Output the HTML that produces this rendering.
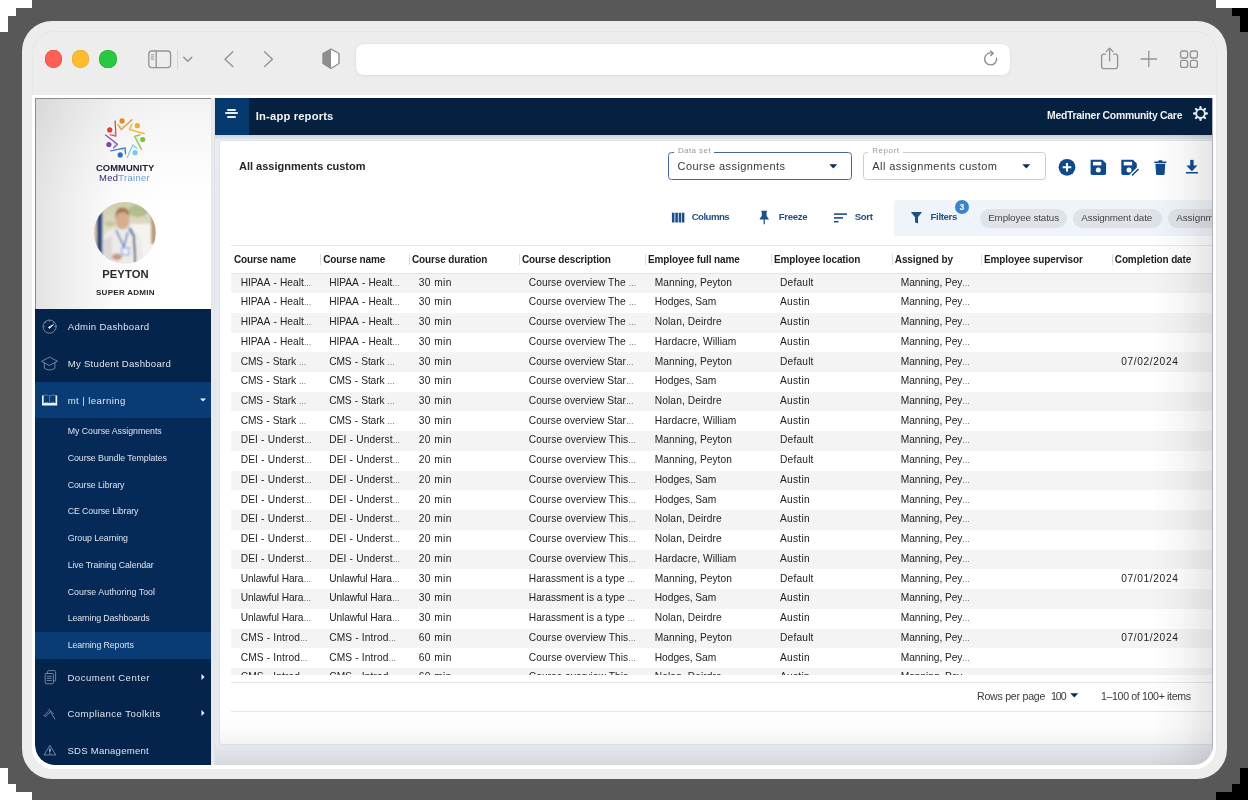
<!DOCTYPE html><html><head><meta charset="utf-8"><style>*{box-sizing:border-box;margin:0;padding:0}
html,body{width:1250px;height:800px;overflow:hidden;background:#585858;font-family:"Liberation Sans",sans-serif}
.a{position:absolute}
.t{position:absolute;white-space:nowrap;line-height:1}
#win{left:22px;top:21px;width:1205px;height:758px;border-radius:30px;background:#ededed}
#winline{left:32px;top:31px;width:1185px;height:738px;border-radius:22px;border:1px solid #e6e6e6}
.tl{width:17.6px;height:17.6px;border-radius:50%}
#url{left:356px;top:44px;width:654px;height:31px;border-radius:8px;background:#fff;box-shadow:0 0 0 0.5px rgba(0,0,0,.03),0 1px 4px rgba(0,0,0,.05)}
#frame{left:31.5px;top:94.5px;width:1184.5px;height:674.5px;background:#fff;border-radius:0 0 21px 21px}
#app{left:35px;top:98px;width:1178px;height:667px;overflow:hidden;border-radius:0 0 18px 18px;background:#e4e8ee}
#sbtop{left:0;top:0;width:176px;height:211px;background:linear-gradient(180deg,#dedede 0%,#f3f3f3 40%,#fff 100%);border-left:1px solid #8a8a8a;border-top:1px solid #8a8a8a}
#sbnav{left:0;top:211px;width:176px;height:456px;background:#05244c}
#sbborder{left:176px;top:0;width:4px;height:667px;background:linear-gradient(90deg,#d6d6d6,#ececec,#f4f4f4)}
#hdr{left:180px;top:0;width:998px;height:37px;background:#061e3d}
#hamb{left:180px;top:0;width:34px;height:37px;background:#053565}
.nav{color:#dfe4ec;font-size:10px}
.sub{color:#dfe4ec;font-size:8.65px}
#card{left:185px;top:43px;width:1000px;height:603px;background:#fff;border-radius:3px}
.hd{font-size:9.6px;font-weight:700;color:#2b2b2b}
.cell{font-size:9.4px;color:#2e2e2e}
</style></head><body><div class="a" style="left:0;top:0;width:1250px;height:800px;overflow:hidden;will-change:transform">
<div class="a" style="left:0.00px;top:0.00px;width:32.00px;height:8.00px;background:#fff"></div>
<div class="a" style="left:0.00px;top:8.00px;width:16.00px;height:8.00px;background:#fff"></div>
<div class="a" style="left:0.00px;top:16.00px;width:8.00px;height:16.00px;background:#fff"></div>
<div class="a" style="left:0.00px;top:768.00px;width:8.00px;height:16.00px;background:#fff"></div>
<div class="a" style="left:0.00px;top:784.00px;width:16.00px;height:8.00px;background:#fff"></div>
<div class="a" style="left:0.00px;top:792.00px;width:32.00px;height:8.00px;background:#fff"></div>
<div class="a" style="left:1216.00px;top:0.00px;width:34.00px;height:8.00px;background:#fff"></div>
<div class="a" style="left:1232.00px;top:8.00px;width:16.00px;height:8.00px;background:#000"></div>
<div class="a" style="left:1240.00px;top:16.00px;width:8.00px;height:16.00px;background:#000"></div>
<div class="a" style="left:1248.00px;top:8.00px;width:2.00px;height:792.00px;background:#fff"></div>
<div class="a" style="left:1240.00px;top:768.00px;width:8.00px;height:32.00px;background:#000"></div>
<div class="a" style="left:1232.00px;top:784.00px;width:16.00px;height:16.00px;background:#000"></div>
<div class="a" style="left:1216.00px;top:792.00px;width:32.00px;height:8.00px;background:#000"></div>
<div id="win" class="a"></div>
<div id="winline" class="a"></div>
<div class="a tl" style="left:44.7px;top:50.2px;background:#fe5f57;box-shadow:inset 0 0 0 0.5px #e14640"></div>
<div class="a tl" style="left:71.5px;top:50.2px;background:#febc2e;box-shadow:inset 0 0 0 0.5px #dfa023"></div>
<div class="a tl" style="left:99.2px;top:50.2px;background:#28c840;box-shadow:inset 0 0 0 0.5px #1dad2b"></div>
<svg class="a" style="left:140px;top:40px" width="160" height="40" viewBox="0 0 160 40">
 <g fill="none" stroke="#939393" stroke-width="1.3" stroke-linecap="round" stroke-linejoin="round">
  <rect x="8.8" y="11" width="21.8" height="16.6" rx="3"/>
  <line x1="16.2" y1="11" x2="16.2" y2="27.6"/>
  <line x1="11.3" y1="14.8" x2="13.8" y2="14.8" stroke-width="1"/>
  <line x1="11.3" y1="17" x2="13.8" y2="17" stroke-width="1"/>
  <line x1="11.3" y1="19.2" x2="13.8" y2="19.2" stroke-width="1"/>
  <path d="M43.8 17.3 L47.8 21.2 L51.8 17.3" stroke-width="1.4"/>
  <path d="M92.8 11.8 L85 19.2 L92.8 26.6" stroke-width="1.35"/>
  <path d="M124.6 11.8 L132.4 19.2 L124.6 26.6" stroke-width="1.35"/>
 </g>
 <line x1="37.6" y1="9.5" x2="37.6" y2="29" stroke="#d4d4d4" stroke-width="1"/>
</svg>
<svg class="a" style="left:318px;top:45px" width="26" height="28" viewBox="0 0 26 28">
 <path d="M13 4 L21 8.5 V18.5 L13 23.5 L5 18.5 V8.5 Z" fill="#fff" stroke="#8e8e8e" stroke-width="1.4" stroke-linejoin="round"/>
 <path d="M13 4 L5 8.5 V18.5 L13 23.5 Z" fill="#8e8e8e"/>
</svg>

<div id="url" class="a"></div>
<svg class="a" style="left:980px;top:48px" width="24" height="24" viewBox="0 0 24 24">
 <path d="M16.6 10.2 A6 6 0 1 1 12.5 5.2" fill="none" stroke="#8e8e8e" stroke-width="1.4" stroke-linecap="round"/>
 <path d="M10.6 3 L13.2 5.2 L10.8 7.6" fill="none" stroke="#8e8e8e" stroke-width="1.4" stroke-linecap="round" stroke-linejoin="round"/>
</svg>
<svg class="a" style="left:1095px;top:44px" width="110" height="30" viewBox="0 0 110 30">
 <g fill="none" stroke="#939393" stroke-width="1.3" stroke-linecap="round" stroke-linejoin="round">
  <path d="M10.5 10.2 H8.8 Q6.6 10.2 6.6 12.4 V22.2 Q6.6 24.6 8.8 24.6 H20.4 Q22.6 24.6 22.6 22.2 V12.4 Q22.6 10.2 20.4 10.2 H18.7"/>
  <line x1="14.6" y1="4.5" x2="14.6" y2="17"/>
  <path d="M11.2 7.6 L14.6 4.3 L18 7.6"/>
  <line x1="46" y1="15" x2="61.6" y2="15"/>
  <line x1="53.8" y1="7.3" x2="53.8" y2="22.7"/>
  <rect x="85.6" y="7" width="7" height="7" rx="2"/>
  <rect x="95.4" y="7" width="7" height="7" rx="2"/>
  <rect x="85.6" y="16.4" width="7" height="7" rx="2"/>
  <rect x="95.4" y="16.4" width="7" height="7" rx="2"/>
 </g>
</svg>

<div id="frame" class="a"></div>
<div class="a" style="left:35px;top:98px;width:1178px;height:667px;border-radius:0 0 20px 20px;overflow:hidden;background:linear-gradient(180deg,#e8ecf2 0%,#e6e9ef 96.8%,#d4d7dc 100%)"><div class="a" style="left:-35px;top:-98px;width:1250px;height:800px">
<div class="a" style="left:35.00px;top:98.00px;width:176.00px;height:211.00px;background:linear-gradient(180deg,rgba(0,0,0,0.05) 0%,rgba(0,0,0,0.02) 25%,rgba(0,0,0,0) 50%),linear-gradient(90deg,#e3e3e3 0%,#f0f0f0 22%,#fbfbfb 45%,#fff 70%)"></div>
<div class="a" style="left:35.00px;top:98.00px;width:1.00px;height:211.00px;background:#8c8c8c"></div>
<div class="a" style="left:35.00px;top:98.00px;width:176.00px;height:1.00px;background:#8c8c8c"></div>
<div class="a" style="left:35px;top:309px;width:176px;height:456px;background:#05244b;border-bottom-left-radius:20px"></div>
<div class="a" style="left:35.00px;top:418.30px;width:176.00px;height:213.70px;background:#052a57"></div>
<div class="a" style="left:35.00px;top:382.20px;width:176.00px;height:36.10px;background:#093c74"></div>
<div class="a" style="left:35.00px;top:631.80px;width:176.00px;height:27.10px;background:#093c74"></div>
<div class="a" style="left:211.00px;top:98.00px;width:4.00px;height:667.00px;background:linear-gradient(90deg,#dde1e8,#ececec 40%,#e9e9e9 70%,#d9dde4)"></div>
<div class="a" style="left:215.00px;top:98.00px;width:998.00px;height:37.00px;background:#062140"></div>
<div class="a" style="left:215.00px;top:98.00px;width:34.00px;height:37.00px;background:#06396d"></div>
<div class="a" style="left:215px;top:135px;width:998px;height:4px;background:linear-gradient(180deg,#cdd3db,#e3e7ed)"></div>
<div class="a" style="left:226.80px;top:109.10px;width:9.40px;height:1.80px;background:#e6edf6;border-radius:1px"></div>
<div class="a" style="left:224.80px;top:112.40px;width:13.40px;height:1.80px;background:#e6edf6;border-radius:1px"></div>
<div class="a" style="left:226.80px;top:116.10px;width:9.40px;height:1.80px;background:#e6edf6;border-radius:1px"></div>
<div class="t" style="left:255.80px;top:110.72px;font-size:11.2px;color:#f2f4f7;font-weight:700;letter-spacing:0.176px;">In-app reports</div>
<div class="t" style="left:1047.00px;top:110.50px;font-size:10.4px;color:#eef1f5;font-weight:700;letter-spacing:-0.251px;">MedTrainer Community Care</div>
<svg class="a" style="left:1191.2px;top:104px" width="19" height="19" viewBox="0 0 19 19">
<circle cx="9.5" cy="9.5" r="4.3" fill="none" stroke="#e4ebf3" stroke-width="1.8"/>
<g stroke="#e4ebf3" stroke-width="2.3" stroke-linecap="round"><line x1="14.40" y1="9.50" x2="15.90" y2="9.50"/><line x1="12.96" y1="12.96" x2="14.03" y2="14.03"/><line x1="9.50" y1="14.40" x2="9.50" y2="15.90"/><line x1="6.04" y1="12.96" x2="4.97" y2="14.03"/><line x1="4.60" y1="9.50" x2="3.10" y2="9.50"/><line x1="6.04" y1="6.04" x2="4.97" y2="4.97"/><line x1="9.50" y1="4.60" x2="9.50" y2="3.10"/><line x1="12.96" y1="6.04" x2="14.03" y2="4.97"/></g></svg>
<div class="a" style="left:220.00px;top:141.00px;width:993.00px;height:603.00px;background:#fff;border-radius:3px 0 0 3px;box-shadow:0 0 0 0.6px #d9dbdf,0 1px 2px rgba(0,0,0,.05)"></div>
<div class="t" style="left:239.00px;top:160.69px;font-size:11px;color:#262626;font-weight:700;">All assignments custom</div>
<svg class="a" style="left:100px;top:113px" width="50" height="50" viewBox="0 0 50 50"><g stroke-linejoin="round" stroke-width="1"><path d="M17.6 11.0 L21.3 16.6 L32.2 6.5" fill="none" stroke="#e08a2a" stroke-width="1.25" opacity="0.9"/><path d="M19.4 13.8 L24.6 13.6 L32.2 6.5" fill="none" stroke="#e08a2a" stroke-width="0.7" opacity="0.55"/><path d="M32.2 10.4 L29.4 16.6 L44.6 20.6" fill="none" stroke="#ebb12e" stroke-width="1.25" opacity="0.9"/><path d="M30.8 13.5 L34.0 17.8 L44.6 20.6" fill="none" stroke="#ebb12e" stroke-width="0.7" opacity="0.55"/><path d="M40.7 21.7 L34.5 23.4 L41.8 36.9" fill="none" stroke="#86c040" stroke-width="1.25" opacity="0.9"/><path d="M37.6 22.5 L36.7 27.5 L41.8 36.9" fill="none" stroke="#86c040" stroke-width="0.7" opacity="0.55"/><path d="M37.3 35.7 L32.8 31.8 L27.2 44.7" fill="none" stroke="#7ccbe3" stroke-width="1.25" opacity="0.9"/><path d="M35.1 33.8 L31.1 35.7 L27.2 44.7" fill="none" stroke="#7ccbe3" stroke-width="0.7" opacity="0.55"/><path d="M25.5 41.4 L25.2 34.9 L10.3 38.0" fill="none" stroke="#2c6fc0" stroke-width="1.25" opacity="0.9"/><path d="M25.4 38.2 L20.7 35.8 L10.3 38.0" fill="none" stroke="#2c6fc0" stroke-width="0.7" opacity="0.55"/><path d="M13.1 35.2 L17.6 31.2 L5.2 21.7" fill="none" stroke="#7a4aa8" stroke-width="1.25" opacity="0.9"/><path d="M15.3 33.2 L13.9 28.3 L5.2 21.7" fill="none" stroke="#7a4aa8" stroke-width="0.7" opacity="0.55"/><path d="M9.7 21.7 L15.9 23.1 L15.1 7.6" fill="none" stroke="#d8403a" stroke-width="1.25" opacity="0.9"/><path d="M12.8 22.4 L15.7 18.4 L15.1 7.6" fill="none" stroke="#d8403a" stroke-width="0.7" opacity="0.55"/></g><circle cx="22.1" cy="7.9" r="2.6" fill="#e08a2a"/><circle cx="37.3" cy="12.7" r="2.6" fill="#ebb12e"/><circle cx="42.7" cy="26.5" r="2.6" fill="#86c040"/><circle cx="35.1" cy="39.7" r="2.6" fill="#7ccbe3"/><circle cx="20.2" cy="41.9" r="2.6" fill="#2c6fc0"/><circle cx="8.9" cy="31.5" r="2.6" fill="#7a4aa8"/><circle cx="9.7" cy="16.9" r="2.6" fill="#d8403a"/></svg>
<div class="t" style="left:96.00px;top:163.04px;font-size:9.4px;color:#1a1a2e;font-weight:700;letter-spacing:0.05px">COMMUNITY</div>
<div class="t" style="left:99.00px;top:172.84px;font-size:9.4px;color:#3b2f7e;font-weight:400;letter-spacing:0.35px"><span style="color:#30297a">Med</span><span style="color:#5f9cd4">Trainer</span></div>
<svg class="a" style="left:94.1px;top:202.1px" width="61.8" height="61.8" viewBox="0 0 61.8 61.8">
<defs><clipPath id="cav"><circle cx="30.9" cy="30.9" r="30.9"/></clipPath>
<filter id="bl" x="-20%" y="-20%" width="140%" height="140%"><feGaussianBlur stdDeviation="0.9"/></filter>
<linearGradient id="bgv" x1="0" y1="0" x2="0" y2="1"><stop offset="0" stop-color="#c9cba2"/><stop offset="0.45" stop-color="#e2dccb"/><stop offset="1" stop-color="#f3f1ee"/></linearGradient></defs>
<g clip-path="url(#cav)"><g filter="url(#bl)">
<rect x="-5" y="-5" width="72" height="72" fill="url(#bgv)"/>
<ellipse cx="44" cy="9" rx="10" ry="6" fill="#b3bd8d"/><rect x="36" y="22" width="30" height="45" fill="#f4f3f0"/>
<ellipse cx="15.9" cy="21.9" rx="5" ry="3" fill="#c3c79c"/>
<rect x="57" y="8" width="6" height="34" fill="#bc9c7a"/>
<rect x="-4.1" y="-2.1" width="8" height="70" fill="#d9c9a9"/>
<rect x="2.9" y="9.9" width="5.5" height="52" fill="#2d4a82"/>
<path d="M8.9 67.9 L9.9 33.9 Q13.9 26.9 22.9 25.9 L33.9 25.9 Q45.9 28.9 47.9 42.9 L49.9 67.9 Z" fill="#ecebea"/>
<path d="M8.9 67.9 L9.9 37.9 L17.9 33.9 L17.9 67.9 Z" fill="#dcd8d6"/>
<ellipse cx="28.4" cy="18.9" rx="6.8" ry="8.6" fill="#d6ad8f"/>
<path d="M21.4 16.9 Q20.4 4.9 28.4 5.4 Q35.9 4.9 35.4 15.9 Q32.9 9.9 27.9 10.4 Q22.9 10.4 21.4 16.9 Z" fill="#a47a52"/>
<path d="M21.9 27.9 L29.9 44.9 L33.9 29.9" fill="none" stroke="#3f61ad" stroke-width="1.3"/>
<rect x="27.9" y="45.9" width="7" height="7" fill="#f4f6fa" stroke="#5b86c9" stroke-width="0.9"/>
<path d="M36.4 26.9 L39.9 33.9 L41.4 63.9" fill="none" stroke="#2b3142" stroke-width="1.7"/>
<path d="M35.4 25.9 L38.9 32.9" fill="none" stroke="#4570b2" stroke-width="2.2"/>
<ellipse cx="22.9" cy="54.9" rx="5" ry="3.5" fill="#c99a80"/>
</g></g></svg>
<div class="t" style="left:102.20px;top:268.92px;font-size:11.2px;color:#2a2a2a;font-weight:700;letter-spacing:0.119px;">PEYTON</div>
<div class="t" style="left:96.00px;top:288.53px;font-size:8px;color:#262626;font-weight:700;letter-spacing:0.280px;">SUPER ADMIN</div>
<div class="t" style="left:67.70px;top:322.17px;font-size:9.6px;color:#dde3ec;font-weight:400;letter-spacing:0.326px;">Admin Dashboard</div>
<div class="t" style="left:67.70px;top:358.87px;font-size:9.6px;color:#dde3ec;font-weight:400;letter-spacing:0.264px;">My Student Dashboard</div>
<div class="t" style="left:67.70px;top:395.67px;font-size:9.6px;color:#dde3ec;font-weight:400;letter-spacing:0.420px;">mt | learning</div>
<div class="t" style="left:67.70px;top:427.35px;font-size:8.8px;color:#dde3ec;font-weight:400;letter-spacing:-0.038px;">My Course Assignments</div>
<div class="t" style="left:67.70px;top:454.05px;font-size:8.8px;color:#dde3ec;font-weight:400;letter-spacing:-0.058px;">Course Bundle Templates</div>
<div class="t" style="left:67.70px;top:480.75px;font-size:8.8px;color:#dde3ec;font-weight:400;letter-spacing:-0.070px;">Course Library</div>
<div class="t" style="left:67.70px;top:507.45px;font-size:8.8px;color:#dde3ec;font-weight:400;letter-spacing:-0.098px;">CE Course Library</div>
<div class="t" style="left:67.70px;top:534.15px;font-size:8.8px;color:#dde3ec;font-weight:400;letter-spacing:-0.065px;">Group Learning</div>
<div class="t" style="left:67.70px;top:560.85px;font-size:8.8px;color:#dde3ec;font-weight:400;letter-spacing:-0.092px;">Live Training Calendar</div>
<div class="t" style="left:67.70px;top:587.55px;font-size:8.8px;color:#dde3ec;font-weight:400;letter-spacing:0.044px;">Course Authoring Tool</div>
<div class="t" style="left:67.70px;top:614.25px;font-size:8.8px;color:#dde3ec;font-weight:400;letter-spacing:-0.113px;">Learning Dashboards</div>
<div class="t" style="left:67.70px;top:640.95px;font-size:8.8px;color:#dde3ec;font-weight:400;letter-spacing:-0.093px;">Learning Reports</div>
<div class="t" style="left:67.40px;top:673.27px;font-size:9.6px;color:#dde3ec;font-weight:400;letter-spacing:0.491px;">Document Center</div>
<div class="t" style="left:67.40px;top:709.17px;font-size:9.6px;color:#dde3ec;font-weight:400;letter-spacing:0.429px;">Compliance Toolkits</div>
<div class="t" style="left:67.40px;top:745.97px;font-size:9.6px;color:#dde3ec;font-weight:400;letter-spacing:0.229px;">SDS Management</div>
<svg class="a" style="left:35px;top:309px" width="176" height="456" viewBox="0 0 176 456">
<g fill="none" stroke="#7d8ea8" stroke-width="0.9" stroke-linecap="round" stroke-linejoin="round">
<circle cx="14.6" cy="17.6" r="6.6"/>
<path d="M14.6 11.6 V12.4 M8.6 17.6 H9.4 M19.8 17.6 H20.6 M10.4 13.4 L10.9 13.9 M18.8 13.4 L18.3 13.9"/>
<path d="M6.8 52.2 L14.6 48.1 L22.5 52.2 L14.6 56.3 Z"/>
<path d="M9.3 53.6 V59.2 Q14.6 62.8 19.9 59.2 V53.6"/>
<path d="M11.2 364.5 H17.4 Q18.4 364.5 18.4 365.5 V373.8 Q18.4 374.8 17.4 374.8 H11.2 Q10.2 374.8 10.2 373.8 V365.5 Q10.2 364.5 11.2 364.5 Z"/>
<path d="M12.6 364.5 V362.6 Q12.6 361.6 13.6 361.6 H19.6 Q20.6 361.6 20.6 362.6 V371 Q20.6 372 19.6 372 H18.4"/>
<path d="M12.3 367.3 H16.3 M12.3 369.4 H16.3 M12.3 371.5 H16.3"/>
<path d="M9.2 406.5 L13.8 401.9 M10.4 407.7 L15 403.1 M9.2 406.5 L10.4 407.7 M13.6 400 L18.2 404.6 M15.3 402.2 L19.8 410"/>
<path d="M9.2 445.6 L14.9 436.3 L20.6 445.6 Z"/>
</g>
<path d="M14.9 439.4 V442.8" stroke="#c6d0de" stroke-width="1.4"/>
<circle cx="14.9" cy="444.2" r="0.6" fill="#c6d0de"/>
<path d="M13.4 18.4 L18.6 15.6 L14.4 19.4 Z" fill="#f2f5f9" stroke="#f2f5f9" stroke-width="0.8" stroke-linejoin="round"/>
<path d="M8 86.6 Q11.5 85 14.6 87 Q17.7 85 21.2 86.6 V95.5 H8 Z" fill="none" stroke="#5d7ca3" stroke-width="1"/>
<path d="M14.6 87 V95" stroke="#5d7ca3" stroke-width="0.9"/>
<path d="M7.8 86.5 V95.6 H21.4 V86.5" fill="none" stroke="#eef3f9" stroke-width="1.6"/>
<path d="M8.4 95 Q11.5 93.2 14.6 95 Q17.7 93.2 20.8 95" fill="none" stroke="#eef3f9" stroke-width="1.2"/>
<path d="M165 89.5 L171 89.5 L168 92.5 Z" fill="#f3f6fa"/>
<path d="M166.5 365 L169.5 368 L166.5 371 Z" fill="#f3f6fa"/>
<path d="M166.5 401 L169.5 404 L166.5 407 Z" fill="#f3f6fa"/>
</svg>
<div class="a" style="left:668.3px;top:152px;width:183.4px;height:27.5px;border:1.1px solid #45699b;border-radius:3.5px"></div>
<div class="a" style="left:673.60px;top:150.00px;width:40.00px;height:4.00px;background:#fff"></div>
<div class="t" style="left:677.90px;top:146.83px;font-size:8px;color:#999;font-weight:400;letter-spacing:0.418px;">Data set</div>
<div class="t" style="left:677.60px;top:161.29px;font-size:11px;color:#383838;font-weight:400;letter-spacing:0.418px;">Course assignments</div>
<svg class="a" style="left:828.5px;top:164px" width="9" height="5" viewBox="0 0 9 5"><path d="M0.3 0.3 H8.3 L4.3 4.4 Z" fill="#0d2d55"/></svg>
<div class="a" style="left:863.3px;top:152px;width:182.4px;height:27.5px;border:1px solid #cdcdcd;border-radius:3.5px"></div>
<div class="a" style="left:867.80px;top:150.00px;width:35.20px;height:4.00px;background:#fff"></div>
<div class="t" style="left:872.30px;top:146.83px;font-size:8px;color:#999;font-weight:400;letter-spacing:0.521px;">Report</div>
<div class="t" style="left:872.30px;top:161.29px;font-size:11px;color:#383838;font-weight:400;letter-spacing:0.435px;">All assignments custom</div>
<svg class="a" style="left:1022px;top:164px" width="9" height="5" viewBox="0 0 9 5"><path d="M0.3 0.3 H8.3 L4.3 4.4 Z" fill="#0d2d55"/></svg>
<svg class="a" style="left:1055px;top:155px" width="150" height="25" viewBox="0 0 150 25">
<circle cx="12" cy="12.3" r="8.4" fill="#114a8a"/>
<path d="M12 8 V16.6 M7.7 12.3 H16.3" stroke="#fff" stroke-width="2.1"/>
<path d="M35.6 4.8 H47.4 L51.1 8.5 V18.3 Q51.1 20 49.4 20 H37.3 Q35.6 20 35.6 18.3 Z" fill="#114a8a"/>
<rect x="38" y="6.8" width="8.4" height="3.6" fill="#fff"/>
<circle cx="43.3" cy="15.1" r="2.5" fill="#fff"/>
<path d="M66.3 4.8 H78 L81.8 8.5 V12.5 L74.5 19.8 V20 H68 Q66.3 20 66.3 18.3 Z" fill="#114a8a"/>
<rect x="68.7" y="6.8" width="8.4" height="3.6" fill="#fff"/>
<circle cx="74" cy="15.1" r="2.5" fill="#fff"/>
<path d="M77 20.5 L83.5 14" stroke="#114a8a" stroke-width="1.6"/>
<path d="M99.3 7.2 H111.4 M103.5 6 H107.3" stroke="#114a8a" stroke-width="1.6"/>
<path d="M100.4 8.8 H110.3 L109.6 19 Q109.5 20 108.6 20 H102.1 Q101.2 20 101.1 19 Z" fill="#114a8a"/>
<rect x="135.2" y="4.9" width="3.4" height="6.4" fill="#114a8a"/><path d="M131.4 10.6 H142.4 L136.9 16.3 Z" fill="#114a8a"/>
<path d="M130.9 17.7 H143" stroke="#114a8a" stroke-width="1.5"/>
</svg>
<svg class="a" style="left:665px;top:205px" width="200" height="25" viewBox="0 0 200 25">
<g fill="#1f4f88">
<rect x="6.9" y="7.7" width="2.6" height="9.8"/><rect x="10.3" y="7.7" width="2.6" height="9.8"/><rect x="13.7" y="7.7" width="2.6" height="9.8"/><rect x="17" y="7.7" width="2.4" height="9.8"/>
<path d="M96 5.8 H102.4 L101.6 7.2 V11 L103.6 13.6 V14.4 H99.8 V19.2 H98.6 V14.4 H94.8 V13.6 L96.8 11 V7.2 Z"/>
<rect x="169" y="8.3" width="13" height="1.6"/><rect x="169" y="12.1" width="9" height="1.6"/><rect x="169" y="15.9" width="4.5" height="1.6"/>
</g></svg>
<div class="t" style="left:691.70px;top:212.27px;font-size:9.6px;color:#1f4f88;font-weight:700;letter-spacing:-0.514px;">Columns</div>
<div class="t" style="left:778.70px;top:212.27px;font-size:9.6px;color:#1f4f88;font-weight:700;letter-spacing:-0.308px;">Freeze</div>
<div class="t" style="left:854.80px;top:212.27px;font-size:9.6px;color:#1f4f88;font-weight:700;letter-spacing:-0.374px;">Sort</div>
<div class="a" style="left:894.30px;top:200.00px;width:318.70px;height:36.00px;background:#eff4fb;border-radius:3px 0 0 3px"></div>
<svg class="a" style="left:908px;top:209px" width="18" height="18" viewBox="0 0 18 18"><path d="M2.9 3 H14 L10 8.2 V14.5 L7 13.2 V8.2 Z" fill="#1f4f88"/></svg>
<div class="t" style="left:930.60px;top:212.27px;font-size:9.6px;color:#1f4f88;font-weight:700;letter-spacing:-0.339px;">Filters</div>
<div class="a" style="left:954.7px;top:200.2px;width:14px;height:14px;border-radius:50%;background:#3c83c9"></div>
<div class="t" style="left:959.50px;top:203.02px;font-size:8.6px;color:#fff;font-weight:700;">3</div>
<div class="a" style="left:979.60px;top:209.00px;width:87.50px;height:18.80px;background:#dfe3e8;border-radius:9.4px"></div>
<div class="t" style="left:988.20px;top:213.00px;font-size:9.8px;color:#454545;font-weight:400;letter-spacing:-0.111px;">Employee status</div>
<div class="a" style="left:1073.10px;top:209.00px;width:88.80px;height:18.80px;background:#dfe3e8;border-radius:9.4px"></div>
<div class="t" style="left:1081.30px;top:213.00px;font-size:9.8px;color:#454545;font-weight:400;letter-spacing:-0.150px;">Assignment date</div>
<div class="a" style="left:1168.00px;top:209.00px;width:92.00px;height:18.80px;background:#dfe3e8;border-radius:9.4px"></div>
<div class="t" style="left:1176.20px;top:213.00px;font-size:9.8px;color:#454545;font-weight:400;">Assignment</div>
<div class="a" style="left:231.40px;top:244.60px;width:981.60px;height:1.00px;background:#e8e8e8"></div>
<div class="a" style="left:231.40px;top:272.60px;width:981.60px;height:1.00px;background:#e4e4e4"></div>
<div class="t" style="left:234.00px;top:255.03px;font-size:10px;color:#222;font-weight:700;letter-spacing:-0.13px">Course name</div>
<div class="t" style="left:323.20px;top:255.03px;font-size:10px;color:#222;font-weight:700;letter-spacing:-0.13px">Course name</div>
<div class="t" style="left:412.00px;top:255.03px;font-size:10px;color:#222;font-weight:700;letter-spacing:-0.13px">Course duration</div>
<div class="t" style="left:522.00px;top:255.03px;font-size:10px;color:#222;font-weight:700;letter-spacing:-0.13px">Course description</div>
<div class="t" style="left:648.00px;top:255.03px;font-size:10px;color:#222;font-weight:700;letter-spacing:-0.13px">Employee full name</div>
<div class="t" style="left:774.00px;top:255.03px;font-size:10px;color:#222;font-weight:700;letter-spacing:-0.13px">Employee location</div>
<div class="t" style="left:894.80px;top:255.03px;font-size:10px;color:#222;font-weight:700;letter-spacing:-0.13px">Assigned by</div>
<div class="t" style="left:984.00px;top:255.03px;font-size:10px;color:#222;font-weight:700;letter-spacing:-0.13px">Employee supervisor</div>
<div class="t" style="left:1114.80px;top:255.03px;font-size:10px;color:#222;font-weight:700;letter-spacing:-0.13px">Completion date</div>
<div class="a" style="left:320.20px;top:254.00px;width:1.20px;height:11.00px;background:#dadada"></div>
<div class="a" style="left:409.20px;top:254.00px;width:1.20px;height:11.00px;background:#dadada"></div>
<div class="a" style="left:519.20px;top:254.00px;width:1.20px;height:11.00px;background:#dadada"></div>
<div class="a" style="left:644.80px;top:254.00px;width:1.20px;height:11.00px;background:#dadada"></div>
<div class="a" style="left:771.20px;top:254.00px;width:1.20px;height:11.00px;background:#dadada"></div>
<div class="a" style="left:892.00px;top:254.00px;width:1.20px;height:11.00px;background:#dadada"></div>
<div class="a" style="left:980.80px;top:254.00px;width:1.20px;height:11.00px;background:#dadada"></div>
<div class="a" style="left:1112.00px;top:254.00px;width:1.20px;height:11.00px;background:#dadada"></div>
<div class="a" style="left:231.4px;top:273.6px;width:981.6px;height:401.2px;overflow:hidden"><div class="a" style="left:-231.4px;top:-273.6px;width:1250px;height:800px">
<div class="a" style="left:231.40px;top:273.30px;width:981.60px;height:19.74px;background:#f4f4f4"></div>
<div class="t" style="left:240.70px;top:277.57px;font-size:10.2px;color:#222;font-weight:400;letter-spacing:-0.030px;">HIPAA<span style="display:inline-block;width:0.95em;text-align:center">-</span>Healt<span style="font-size:0.75em;letter-spacing:-0.6px">…</span></div>
<div class="t" style="left:329.20px;top:277.57px;font-size:10.2px;color:#222;font-weight:400;letter-spacing:-0.030px;">HIPAA<span style="display:inline-block;width:0.95em;text-align:center">-</span>Healt<span style="font-size:0.75em;letter-spacing:-0.6px">…</span></div>
<div class="t" style="left:418.80px;top:277.57px;font-size:10.2px;color:#222;font-weight:400;letter-spacing:0.408px;">30 min</div>
<div class="t" style="left:528.80px;top:277.57px;font-size:10.2px;color:#222;font-weight:400;letter-spacing:0.049px;">Course overview The <span style="font-size:0.75em;letter-spacing:-0.6px">…</span></div>
<div class="t" style="left:654.80px;top:277.57px;font-size:10.2px;color:#222;font-weight:400;letter-spacing:0.039px;">Manning, Peyton</div>
<div class="t" style="left:780.00px;top:277.57px;font-size:10.2px;color:#222;font-weight:400;letter-spacing:0.189px;">Default</div>
<div class="t" style="left:900.80px;top:277.57px;font-size:10.2px;color:#222;font-weight:400;letter-spacing:-0.068px;">Manning, Pey<span style="font-size:0.75em;letter-spacing:-0.6px">…</span></div>
<div class="t" style="left:240.70px;top:297.31px;font-size:10.2px;color:#222;font-weight:400;letter-spacing:-0.030px;">HIPAA<span style="display:inline-block;width:0.95em;text-align:center">-</span>Healt<span style="font-size:0.75em;letter-spacing:-0.6px">…</span></div>
<div class="t" style="left:329.20px;top:297.31px;font-size:10.2px;color:#222;font-weight:400;letter-spacing:-0.030px;">HIPAA<span style="display:inline-block;width:0.95em;text-align:center">-</span>Healt<span style="font-size:0.75em;letter-spacing:-0.6px">…</span></div>
<div class="t" style="left:418.80px;top:297.31px;font-size:10.2px;color:#222;font-weight:400;letter-spacing:0.408px;">30 min</div>
<div class="t" style="left:528.80px;top:297.31px;font-size:10.2px;color:#222;font-weight:400;letter-spacing:0.049px;">Course overview The <span style="font-size:0.75em;letter-spacing:-0.6px">…</span></div>
<div class="t" style="left:654.80px;top:297.31px;font-size:10.2px;color:#222;font-weight:400;letter-spacing:-0.032px;">Hodges, Sam</div>
<div class="t" style="left:780.00px;top:297.31px;font-size:10.2px;color:#222;font-weight:400;letter-spacing:0.268px;">Austin</div>
<div class="t" style="left:900.80px;top:297.31px;font-size:10.2px;color:#222;font-weight:400;letter-spacing:-0.068px;">Manning, Pey<span style="font-size:0.75em;letter-spacing:-0.6px">…</span></div>
<div class="a" style="left:231.40px;top:312.78px;width:981.60px;height:19.74px;background:#f4f4f4"></div>
<div class="t" style="left:240.70px;top:317.05px;font-size:10.2px;color:#222;font-weight:400;letter-spacing:-0.030px;">HIPAA<span style="display:inline-block;width:0.95em;text-align:center">-</span>Healt<span style="font-size:0.75em;letter-spacing:-0.6px">…</span></div>
<div class="t" style="left:329.20px;top:317.05px;font-size:10.2px;color:#222;font-weight:400;letter-spacing:-0.030px;">HIPAA<span style="display:inline-block;width:0.95em;text-align:center">-</span>Healt<span style="font-size:0.75em;letter-spacing:-0.6px">…</span></div>
<div class="t" style="left:418.80px;top:317.05px;font-size:10.2px;color:#222;font-weight:400;letter-spacing:0.408px;">30 min</div>
<div class="t" style="left:528.80px;top:317.05px;font-size:10.2px;color:#222;font-weight:400;letter-spacing:0.049px;">Course overview The <span style="font-size:0.75em;letter-spacing:-0.6px">…</span></div>
<div class="t" style="left:654.80px;top:317.05px;font-size:10.2px;color:#222;font-weight:400;letter-spacing:0.095px;">Nolan, Deirdre</div>
<div class="t" style="left:780.00px;top:317.05px;font-size:10.2px;color:#222;font-weight:400;letter-spacing:0.268px;">Austin</div>
<div class="t" style="left:900.80px;top:317.05px;font-size:10.2px;color:#222;font-weight:400;letter-spacing:-0.068px;">Manning, Pey<span style="font-size:0.75em;letter-spacing:-0.6px">…</span></div>
<div class="t" style="left:240.70px;top:336.79px;font-size:10.2px;color:#222;font-weight:400;letter-spacing:-0.030px;">HIPAA<span style="display:inline-block;width:0.95em;text-align:center">-</span>Healt<span style="font-size:0.75em;letter-spacing:-0.6px">…</span></div>
<div class="t" style="left:329.20px;top:336.79px;font-size:10.2px;color:#222;font-weight:400;letter-spacing:-0.030px;">HIPAA<span style="display:inline-block;width:0.95em;text-align:center">-</span>Healt<span style="font-size:0.75em;letter-spacing:-0.6px">…</span></div>
<div class="t" style="left:418.80px;top:336.79px;font-size:10.2px;color:#222;font-weight:400;letter-spacing:0.408px;">30 min</div>
<div class="t" style="left:528.80px;top:336.79px;font-size:10.2px;color:#222;font-weight:400;letter-spacing:0.049px;">Course overview The <span style="font-size:0.75em;letter-spacing:-0.6px">…</span></div>
<div class="t" style="left:654.80px;top:336.79px;font-size:10.2px;color:#222;font-weight:400;letter-spacing:0.064px;">Hardacre, William</div>
<div class="t" style="left:780.00px;top:336.79px;font-size:10.2px;color:#222;font-weight:400;letter-spacing:0.268px;">Austin</div>
<div class="t" style="left:900.80px;top:336.79px;font-size:10.2px;color:#222;font-weight:400;letter-spacing:-0.068px;">Manning, Pey<span style="font-size:0.75em;letter-spacing:-0.6px">…</span></div>
<div class="a" style="left:231.40px;top:352.26px;width:981.60px;height:19.74px;background:#f4f4f4"></div>
<div class="t" style="left:240.70px;top:356.53px;font-size:10.2px;color:#222;font-weight:400;letter-spacing:-0.105px;">CMS<span style="display:inline-block;width:0.95em;text-align:center">-</span>Stark <span style="font-size:0.75em;letter-spacing:-0.6px">…</span></div>
<div class="t" style="left:329.20px;top:356.53px;font-size:10.2px;color:#222;font-weight:400;letter-spacing:-0.105px;">CMS<span style="display:inline-block;width:0.95em;text-align:center">-</span>Stark <span style="font-size:0.75em;letter-spacing:-0.6px">…</span></div>
<div class="t" style="left:418.80px;top:356.53px;font-size:10.2px;color:#222;font-weight:400;letter-spacing:0.408px;">30 min</div>
<div class="t" style="left:528.80px;top:356.53px;font-size:10.2px;color:#222;font-weight:400;letter-spacing:-0.015px;">Course overview Star<span style="font-size:0.75em;letter-spacing:-0.6px">…</span></div>
<div class="t" style="left:654.80px;top:356.53px;font-size:10.2px;color:#222;font-weight:400;letter-spacing:0.039px;">Manning, Peyton</div>
<div class="t" style="left:780.00px;top:356.53px;font-size:10.2px;color:#222;font-weight:400;letter-spacing:0.189px;">Default</div>
<div class="t" style="left:900.80px;top:356.53px;font-size:10.2px;color:#222;font-weight:400;letter-spacing:-0.068px;">Manning, Pey<span style="font-size:0.75em;letter-spacing:-0.6px">…</span></div>
<div class="t" style="left:1121.20px;top:356.53px;font-size:10.2px;color:#222;font-weight:400;letter-spacing:0.635px;">07/02/2024</div>
<div class="t" style="left:240.70px;top:376.27px;font-size:10.2px;color:#222;font-weight:400;letter-spacing:-0.105px;">CMS<span style="display:inline-block;width:0.95em;text-align:center">-</span>Stark <span style="font-size:0.75em;letter-spacing:-0.6px">…</span></div>
<div class="t" style="left:329.20px;top:376.27px;font-size:10.2px;color:#222;font-weight:400;letter-spacing:-0.105px;">CMS<span style="display:inline-block;width:0.95em;text-align:center">-</span>Stark <span style="font-size:0.75em;letter-spacing:-0.6px">…</span></div>
<div class="t" style="left:418.80px;top:376.27px;font-size:10.2px;color:#222;font-weight:400;letter-spacing:0.408px;">30 min</div>
<div class="t" style="left:528.80px;top:376.27px;font-size:10.2px;color:#222;font-weight:400;letter-spacing:-0.015px;">Course overview Star<span style="font-size:0.75em;letter-spacing:-0.6px">…</span></div>
<div class="t" style="left:654.80px;top:376.27px;font-size:10.2px;color:#222;font-weight:400;letter-spacing:-0.032px;">Hodges, Sam</div>
<div class="t" style="left:780.00px;top:376.27px;font-size:10.2px;color:#222;font-weight:400;letter-spacing:0.268px;">Austin</div>
<div class="t" style="left:900.80px;top:376.27px;font-size:10.2px;color:#222;font-weight:400;letter-spacing:-0.068px;">Manning, Pey<span style="font-size:0.75em;letter-spacing:-0.6px">…</span></div>
<div class="a" style="left:231.40px;top:391.74px;width:981.60px;height:19.74px;background:#f4f4f4"></div>
<div class="t" style="left:240.70px;top:396.01px;font-size:10.2px;color:#222;font-weight:400;letter-spacing:-0.105px;">CMS<span style="display:inline-block;width:0.95em;text-align:center">-</span>Stark <span style="font-size:0.75em;letter-spacing:-0.6px">…</span></div>
<div class="t" style="left:329.20px;top:396.01px;font-size:10.2px;color:#222;font-weight:400;letter-spacing:-0.105px;">CMS<span style="display:inline-block;width:0.95em;text-align:center">-</span>Stark <span style="font-size:0.75em;letter-spacing:-0.6px">…</span></div>
<div class="t" style="left:418.80px;top:396.01px;font-size:10.2px;color:#222;font-weight:400;letter-spacing:0.408px;">30 min</div>
<div class="t" style="left:528.80px;top:396.01px;font-size:10.2px;color:#222;font-weight:400;letter-spacing:-0.015px;">Course overview Star<span style="font-size:0.75em;letter-spacing:-0.6px">…</span></div>
<div class="t" style="left:654.80px;top:396.01px;font-size:10.2px;color:#222;font-weight:400;letter-spacing:0.095px;">Nolan, Deirdre</div>
<div class="t" style="left:780.00px;top:396.01px;font-size:10.2px;color:#222;font-weight:400;letter-spacing:0.268px;">Austin</div>
<div class="t" style="left:900.80px;top:396.01px;font-size:10.2px;color:#222;font-weight:400;letter-spacing:-0.068px;">Manning, Pey<span style="font-size:0.75em;letter-spacing:-0.6px">…</span></div>
<div class="t" style="left:240.70px;top:415.75px;font-size:10.2px;color:#222;font-weight:400;letter-spacing:-0.105px;">CMS<span style="display:inline-block;width:0.95em;text-align:center">-</span>Stark <span style="font-size:0.75em;letter-spacing:-0.6px">…</span></div>
<div class="t" style="left:329.20px;top:415.75px;font-size:10.2px;color:#222;font-weight:400;letter-spacing:-0.105px;">CMS<span style="display:inline-block;width:0.95em;text-align:center">-</span>Stark <span style="font-size:0.75em;letter-spacing:-0.6px">…</span></div>
<div class="t" style="left:418.80px;top:415.75px;font-size:10.2px;color:#222;font-weight:400;letter-spacing:0.408px;">30 min</div>
<div class="t" style="left:528.80px;top:415.75px;font-size:10.2px;color:#222;font-weight:400;letter-spacing:-0.015px;">Course overview Star<span style="font-size:0.75em;letter-spacing:-0.6px">…</span></div>
<div class="t" style="left:654.80px;top:415.75px;font-size:10.2px;color:#222;font-weight:400;letter-spacing:0.064px;">Hardacre, William</div>
<div class="t" style="left:780.00px;top:415.75px;font-size:10.2px;color:#222;font-weight:400;letter-spacing:0.268px;">Austin</div>
<div class="t" style="left:900.80px;top:415.75px;font-size:10.2px;color:#222;font-weight:400;letter-spacing:-0.068px;">Manning, Pey<span style="font-size:0.75em;letter-spacing:-0.6px">…</span></div>
<div class="a" style="left:231.40px;top:431.22px;width:981.60px;height:19.74px;background:#f4f4f4"></div>
<div class="t" style="left:240.70px;top:435.49px;font-size:10.2px;color:#222;font-weight:400;letter-spacing:0.104px;">DEI<span style="display:inline-block;width:0.95em;text-align:center">-</span>Underst<span style="font-size:0.75em;letter-spacing:-0.6px">…</span></div>
<div class="t" style="left:329.20px;top:435.49px;font-size:10.2px;color:#222;font-weight:400;letter-spacing:0.104px;">DEI<span style="display:inline-block;width:0.95em;text-align:center">-</span>Underst<span style="font-size:0.75em;letter-spacing:-0.6px">…</span></div>
<div class="t" style="left:418.80px;top:435.49px;font-size:10.2px;color:#222;font-weight:400;letter-spacing:0.408px;">20 min</div>
<div class="t" style="left:528.80px;top:435.49px;font-size:10.2px;color:#222;font-weight:400;letter-spacing:0.086px;">Course overview This<span style="font-size:0.75em;letter-spacing:-0.6px">…</span></div>
<div class="t" style="left:654.80px;top:435.49px;font-size:10.2px;color:#222;font-weight:400;letter-spacing:0.039px;">Manning, Peyton</div>
<div class="t" style="left:780.00px;top:435.49px;font-size:10.2px;color:#222;font-weight:400;letter-spacing:0.189px;">Default</div>
<div class="t" style="left:900.80px;top:435.49px;font-size:10.2px;color:#222;font-weight:400;letter-spacing:-0.068px;">Manning, Pey<span style="font-size:0.75em;letter-spacing:-0.6px">…</span></div>
<div class="t" style="left:240.70px;top:455.23px;font-size:10.2px;color:#222;font-weight:400;letter-spacing:0.104px;">DEI<span style="display:inline-block;width:0.95em;text-align:center">-</span>Underst<span style="font-size:0.75em;letter-spacing:-0.6px">…</span></div>
<div class="t" style="left:329.20px;top:455.23px;font-size:10.2px;color:#222;font-weight:400;letter-spacing:0.104px;">DEI<span style="display:inline-block;width:0.95em;text-align:center">-</span>Underst<span style="font-size:0.75em;letter-spacing:-0.6px">…</span></div>
<div class="t" style="left:418.80px;top:455.23px;font-size:10.2px;color:#222;font-weight:400;letter-spacing:0.408px;">20 min</div>
<div class="t" style="left:528.80px;top:455.23px;font-size:10.2px;color:#222;font-weight:400;letter-spacing:0.086px;">Course overview This<span style="font-size:0.75em;letter-spacing:-0.6px">…</span></div>
<div class="t" style="left:654.80px;top:455.23px;font-size:10.2px;color:#222;font-weight:400;letter-spacing:0.039px;">Manning, Peyton</div>
<div class="t" style="left:780.00px;top:455.23px;font-size:10.2px;color:#222;font-weight:400;letter-spacing:0.189px;">Default</div>
<div class="t" style="left:900.80px;top:455.23px;font-size:10.2px;color:#222;font-weight:400;letter-spacing:-0.068px;">Manning, Pey<span style="font-size:0.75em;letter-spacing:-0.6px">…</span></div>
<div class="a" style="left:231.40px;top:470.70px;width:981.60px;height:19.74px;background:#f4f4f4"></div>
<div class="t" style="left:240.70px;top:474.97px;font-size:10.2px;color:#222;font-weight:400;letter-spacing:0.104px;">DEI<span style="display:inline-block;width:0.95em;text-align:center">-</span>Underst<span style="font-size:0.75em;letter-spacing:-0.6px">…</span></div>
<div class="t" style="left:329.20px;top:474.97px;font-size:10.2px;color:#222;font-weight:400;letter-spacing:0.104px;">DEI<span style="display:inline-block;width:0.95em;text-align:center">-</span>Underst<span style="font-size:0.75em;letter-spacing:-0.6px">…</span></div>
<div class="t" style="left:418.80px;top:474.97px;font-size:10.2px;color:#222;font-weight:400;letter-spacing:0.408px;">20 min</div>
<div class="t" style="left:528.80px;top:474.97px;font-size:10.2px;color:#222;font-weight:400;letter-spacing:0.086px;">Course overview This<span style="font-size:0.75em;letter-spacing:-0.6px">…</span></div>
<div class="t" style="left:654.80px;top:474.97px;font-size:10.2px;color:#222;font-weight:400;letter-spacing:-0.032px;">Hodges, Sam</div>
<div class="t" style="left:780.00px;top:474.97px;font-size:10.2px;color:#222;font-weight:400;letter-spacing:0.268px;">Austin</div>
<div class="t" style="left:900.80px;top:474.97px;font-size:10.2px;color:#222;font-weight:400;letter-spacing:-0.068px;">Manning, Pey<span style="font-size:0.75em;letter-spacing:-0.6px">…</span></div>
<div class="t" style="left:240.70px;top:494.71px;font-size:10.2px;color:#222;font-weight:400;letter-spacing:0.104px;">DEI<span style="display:inline-block;width:0.95em;text-align:center">-</span>Underst<span style="font-size:0.75em;letter-spacing:-0.6px">…</span></div>
<div class="t" style="left:329.20px;top:494.71px;font-size:10.2px;color:#222;font-weight:400;letter-spacing:0.104px;">DEI<span style="display:inline-block;width:0.95em;text-align:center">-</span>Underst<span style="font-size:0.75em;letter-spacing:-0.6px">…</span></div>
<div class="t" style="left:418.80px;top:494.71px;font-size:10.2px;color:#222;font-weight:400;letter-spacing:0.408px;">20 min</div>
<div class="t" style="left:528.80px;top:494.71px;font-size:10.2px;color:#222;font-weight:400;letter-spacing:0.086px;">Course overview This<span style="font-size:0.75em;letter-spacing:-0.6px">…</span></div>
<div class="t" style="left:654.80px;top:494.71px;font-size:10.2px;color:#222;font-weight:400;letter-spacing:-0.032px;">Hodges, Sam</div>
<div class="t" style="left:780.00px;top:494.71px;font-size:10.2px;color:#222;font-weight:400;letter-spacing:0.268px;">Austin</div>
<div class="t" style="left:900.80px;top:494.71px;font-size:10.2px;color:#222;font-weight:400;letter-spacing:-0.068px;">Manning, Pey<span style="font-size:0.75em;letter-spacing:-0.6px">…</span></div>
<div class="a" style="left:231.40px;top:510.18px;width:981.60px;height:19.74px;background:#f4f4f4"></div>
<div class="t" style="left:240.70px;top:514.45px;font-size:10.2px;color:#222;font-weight:400;letter-spacing:0.104px;">DEI<span style="display:inline-block;width:0.95em;text-align:center">-</span>Underst<span style="font-size:0.75em;letter-spacing:-0.6px">…</span></div>
<div class="t" style="left:329.20px;top:514.45px;font-size:10.2px;color:#222;font-weight:400;letter-spacing:0.104px;">DEI<span style="display:inline-block;width:0.95em;text-align:center">-</span>Underst<span style="font-size:0.75em;letter-spacing:-0.6px">…</span></div>
<div class="t" style="left:418.80px;top:514.45px;font-size:10.2px;color:#222;font-weight:400;letter-spacing:0.408px;">20 min</div>
<div class="t" style="left:528.80px;top:514.45px;font-size:10.2px;color:#222;font-weight:400;letter-spacing:0.086px;">Course overview This<span style="font-size:0.75em;letter-spacing:-0.6px">…</span></div>
<div class="t" style="left:654.80px;top:514.45px;font-size:10.2px;color:#222;font-weight:400;letter-spacing:0.095px;">Nolan, Deirdre</div>
<div class="t" style="left:780.00px;top:514.45px;font-size:10.2px;color:#222;font-weight:400;letter-spacing:0.268px;">Austin</div>
<div class="t" style="left:900.80px;top:514.45px;font-size:10.2px;color:#222;font-weight:400;letter-spacing:-0.068px;">Manning, Pey<span style="font-size:0.75em;letter-spacing:-0.6px">…</span></div>
<div class="t" style="left:240.70px;top:534.19px;font-size:10.2px;color:#222;font-weight:400;letter-spacing:0.104px;">DEI<span style="display:inline-block;width:0.95em;text-align:center">-</span>Underst<span style="font-size:0.75em;letter-spacing:-0.6px">…</span></div>
<div class="t" style="left:329.20px;top:534.19px;font-size:10.2px;color:#222;font-weight:400;letter-spacing:0.104px;">DEI<span style="display:inline-block;width:0.95em;text-align:center">-</span>Underst<span style="font-size:0.75em;letter-spacing:-0.6px">…</span></div>
<div class="t" style="left:418.80px;top:534.19px;font-size:10.2px;color:#222;font-weight:400;letter-spacing:0.408px;">20 min</div>
<div class="t" style="left:528.80px;top:534.19px;font-size:10.2px;color:#222;font-weight:400;letter-spacing:0.086px;">Course overview This<span style="font-size:0.75em;letter-spacing:-0.6px">…</span></div>
<div class="t" style="left:654.80px;top:534.19px;font-size:10.2px;color:#222;font-weight:400;letter-spacing:0.095px;">Nolan, Deirdre</div>
<div class="t" style="left:780.00px;top:534.19px;font-size:10.2px;color:#222;font-weight:400;letter-spacing:0.268px;">Austin</div>
<div class="t" style="left:900.80px;top:534.19px;font-size:10.2px;color:#222;font-weight:400;letter-spacing:-0.068px;">Manning, Pey<span style="font-size:0.75em;letter-spacing:-0.6px">…</span></div>
<div class="a" style="left:231.40px;top:549.66px;width:981.60px;height:19.74px;background:#f4f4f4"></div>
<div class="t" style="left:240.70px;top:553.93px;font-size:10.2px;color:#222;font-weight:400;letter-spacing:0.104px;">DEI<span style="display:inline-block;width:0.95em;text-align:center">-</span>Underst<span style="font-size:0.75em;letter-spacing:-0.6px">…</span></div>
<div class="t" style="left:329.20px;top:553.93px;font-size:10.2px;color:#222;font-weight:400;letter-spacing:0.104px;">DEI<span style="display:inline-block;width:0.95em;text-align:center">-</span>Underst<span style="font-size:0.75em;letter-spacing:-0.6px">…</span></div>
<div class="t" style="left:418.80px;top:553.93px;font-size:10.2px;color:#222;font-weight:400;letter-spacing:0.408px;">20 min</div>
<div class="t" style="left:528.80px;top:553.93px;font-size:10.2px;color:#222;font-weight:400;letter-spacing:0.086px;">Course overview This<span style="font-size:0.75em;letter-spacing:-0.6px">…</span></div>
<div class="t" style="left:654.80px;top:553.93px;font-size:10.2px;color:#222;font-weight:400;letter-spacing:0.064px;">Hardacre, William</div>
<div class="t" style="left:780.00px;top:553.93px;font-size:10.2px;color:#222;font-weight:400;letter-spacing:0.268px;">Austin</div>
<div class="t" style="left:900.80px;top:553.93px;font-size:10.2px;color:#222;font-weight:400;letter-spacing:-0.068px;">Manning, Pey<span style="font-size:0.75em;letter-spacing:-0.6px">…</span></div>
<div class="t" style="left:240.70px;top:573.67px;font-size:10.2px;color:#222;font-weight:400;letter-spacing:-0.100px;">Unlawful Hara<span style="font-size:0.75em;letter-spacing:-0.6px">…</span></div>
<div class="t" style="left:329.20px;top:573.67px;font-size:10.2px;color:#222;font-weight:400;letter-spacing:-0.100px;">Unlawful Hara<span style="font-size:0.75em;letter-spacing:-0.6px">…</span></div>
<div class="t" style="left:418.80px;top:573.67px;font-size:10.2px;color:#222;font-weight:400;letter-spacing:0.408px;">30 min</div>
<div class="t" style="left:528.80px;top:573.67px;font-size:10.2px;color:#222;font-weight:400;letter-spacing:0.007px;">Harassment is a type <span style="font-size:0.75em;letter-spacing:-0.6px">…</span></div>
<div class="t" style="left:654.80px;top:573.67px;font-size:10.2px;color:#222;font-weight:400;letter-spacing:0.039px;">Manning, Peyton</div>
<div class="t" style="left:780.00px;top:573.67px;font-size:10.2px;color:#222;font-weight:400;letter-spacing:0.189px;">Default</div>
<div class="t" style="left:900.80px;top:573.67px;font-size:10.2px;color:#222;font-weight:400;letter-spacing:-0.068px;">Manning, Pey<span style="font-size:0.75em;letter-spacing:-0.6px">…</span></div>
<div class="t" style="left:1121.20px;top:573.67px;font-size:10.2px;color:#222;font-weight:400;letter-spacing:0.635px;">07/01/2024</div>
<div class="a" style="left:231.40px;top:589.14px;width:981.60px;height:19.74px;background:#f4f4f4"></div>
<div class="t" style="left:240.70px;top:593.41px;font-size:10.2px;color:#222;font-weight:400;letter-spacing:-0.100px;">Unlawful Hara<span style="font-size:0.75em;letter-spacing:-0.6px">…</span></div>
<div class="t" style="left:329.20px;top:593.41px;font-size:10.2px;color:#222;font-weight:400;letter-spacing:-0.100px;">Unlawful Hara<span style="font-size:0.75em;letter-spacing:-0.6px">…</span></div>
<div class="t" style="left:418.80px;top:593.41px;font-size:10.2px;color:#222;font-weight:400;letter-spacing:0.408px;">30 min</div>
<div class="t" style="left:528.80px;top:593.41px;font-size:10.2px;color:#222;font-weight:400;letter-spacing:0.007px;">Harassment is a type <span style="font-size:0.75em;letter-spacing:-0.6px">…</span></div>
<div class="t" style="left:654.80px;top:593.41px;font-size:10.2px;color:#222;font-weight:400;letter-spacing:-0.032px;">Hodges, Sam</div>
<div class="t" style="left:780.00px;top:593.41px;font-size:10.2px;color:#222;font-weight:400;letter-spacing:0.268px;">Austin</div>
<div class="t" style="left:900.80px;top:593.41px;font-size:10.2px;color:#222;font-weight:400;letter-spacing:-0.068px;">Manning, Pey<span style="font-size:0.75em;letter-spacing:-0.6px">…</span></div>
<div class="t" style="left:240.70px;top:613.15px;font-size:10.2px;color:#222;font-weight:400;letter-spacing:-0.100px;">Unlawful Hara<span style="font-size:0.75em;letter-spacing:-0.6px">…</span></div>
<div class="t" style="left:329.20px;top:613.15px;font-size:10.2px;color:#222;font-weight:400;letter-spacing:-0.100px;">Unlawful Hara<span style="font-size:0.75em;letter-spacing:-0.6px">…</span></div>
<div class="t" style="left:418.80px;top:613.15px;font-size:10.2px;color:#222;font-weight:400;letter-spacing:0.408px;">30 min</div>
<div class="t" style="left:528.80px;top:613.15px;font-size:10.2px;color:#222;font-weight:400;letter-spacing:0.007px;">Harassment is a type <span style="font-size:0.75em;letter-spacing:-0.6px">…</span></div>
<div class="t" style="left:654.80px;top:613.15px;font-size:10.2px;color:#222;font-weight:400;letter-spacing:0.095px;">Nolan, Deirdre</div>
<div class="t" style="left:780.00px;top:613.15px;font-size:10.2px;color:#222;font-weight:400;letter-spacing:0.268px;">Austin</div>
<div class="t" style="left:900.80px;top:613.15px;font-size:10.2px;color:#222;font-weight:400;letter-spacing:-0.068px;">Manning, Pey<span style="font-size:0.75em;letter-spacing:-0.6px">…</span></div>
<div class="a" style="left:231.40px;top:628.62px;width:981.60px;height:19.74px;background:#f4f4f4"></div>
<div class="t" style="left:240.70px;top:632.89px;font-size:10.2px;color:#222;font-weight:400;letter-spacing:0.110px;">CMS<span style="display:inline-block;width:0.95em;text-align:center">-</span>Introd<span style="font-size:0.75em;letter-spacing:-0.6px">…</span></div>
<div class="t" style="left:329.20px;top:632.89px;font-size:10.2px;color:#222;font-weight:400;letter-spacing:0.110px;">CMS<span style="display:inline-block;width:0.95em;text-align:center">-</span>Introd<span style="font-size:0.75em;letter-spacing:-0.6px">…</span></div>
<div class="t" style="left:418.80px;top:632.89px;font-size:10.2px;color:#222;font-weight:400;letter-spacing:0.408px;">60 min</div>
<div class="t" style="left:528.80px;top:632.89px;font-size:10.2px;color:#222;font-weight:400;letter-spacing:0.086px;">Course overview This<span style="font-size:0.75em;letter-spacing:-0.6px">…</span></div>
<div class="t" style="left:654.80px;top:632.89px;font-size:10.2px;color:#222;font-weight:400;letter-spacing:0.039px;">Manning, Peyton</div>
<div class="t" style="left:780.00px;top:632.89px;font-size:10.2px;color:#222;font-weight:400;letter-spacing:0.189px;">Default</div>
<div class="t" style="left:900.80px;top:632.89px;font-size:10.2px;color:#222;font-weight:400;letter-spacing:-0.068px;">Manning, Pey<span style="font-size:0.75em;letter-spacing:-0.6px">…</span></div>
<div class="t" style="left:1121.20px;top:632.89px;font-size:10.2px;color:#222;font-weight:400;letter-spacing:0.635px;">07/01/2024</div>
<div class="t" style="left:240.70px;top:652.63px;font-size:10.2px;color:#222;font-weight:400;letter-spacing:0.110px;">CMS<span style="display:inline-block;width:0.95em;text-align:center">-</span>Introd<span style="font-size:0.75em;letter-spacing:-0.6px">…</span></div>
<div class="t" style="left:329.20px;top:652.63px;font-size:10.2px;color:#222;font-weight:400;letter-spacing:0.110px;">CMS<span style="display:inline-block;width:0.95em;text-align:center">-</span>Introd<span style="font-size:0.75em;letter-spacing:-0.6px">…</span></div>
<div class="t" style="left:418.80px;top:652.63px;font-size:10.2px;color:#222;font-weight:400;letter-spacing:0.408px;">60 min</div>
<div class="t" style="left:528.80px;top:652.63px;font-size:10.2px;color:#222;font-weight:400;letter-spacing:0.086px;">Course overview This<span style="font-size:0.75em;letter-spacing:-0.6px">…</span></div>
<div class="t" style="left:654.80px;top:652.63px;font-size:10.2px;color:#222;font-weight:400;letter-spacing:-0.032px;">Hodges, Sam</div>
<div class="t" style="left:780.00px;top:652.63px;font-size:10.2px;color:#222;font-weight:400;letter-spacing:0.268px;">Austin</div>
<div class="t" style="left:900.80px;top:652.63px;font-size:10.2px;color:#222;font-weight:400;letter-spacing:-0.068px;">Manning, Pey<span style="font-size:0.75em;letter-spacing:-0.6px">…</span></div>
<div class="a" style="left:231.40px;top:668.10px;width:981.60px;height:19.74px;background:#f4f4f4"></div>
<div class="t" style="left:240.70px;top:672.37px;font-size:10.2px;color:#222;font-weight:400;letter-spacing:0.110px;">CMS<span style="display:inline-block;width:0.95em;text-align:center">-</span>Introd<span style="font-size:0.75em;letter-spacing:-0.6px">…</span></div>
<div class="t" style="left:329.20px;top:672.37px;font-size:10.2px;color:#222;font-weight:400;letter-spacing:0.110px;">CMS<span style="display:inline-block;width:0.95em;text-align:center">-</span>Introd<span style="font-size:0.75em;letter-spacing:-0.6px">…</span></div>
<div class="t" style="left:418.80px;top:672.37px;font-size:10.2px;color:#222;font-weight:400;letter-spacing:0.408px;">60 min</div>
<div class="t" style="left:528.80px;top:672.37px;font-size:10.2px;color:#222;font-weight:400;letter-spacing:0.086px;">Course overview This<span style="font-size:0.75em;letter-spacing:-0.6px">…</span></div>
<div class="t" style="left:654.80px;top:672.37px;font-size:10.2px;color:#222;font-weight:400;letter-spacing:0.095px;">Nolan, Deirdre</div>
<div class="t" style="left:780.00px;top:672.37px;font-size:10.2px;color:#222;font-weight:400;letter-spacing:0.268px;">Austin</div>
<div class="t" style="left:900.80px;top:672.37px;font-size:10.2px;color:#222;font-weight:400;letter-spacing:-0.068px;">Manning, Pey<span style="font-size:0.75em;letter-spacing:-0.6px">…</span></div>
</div></div>
<div class="a" style="left:231.40px;top:682.00px;width:981.60px;height:1.00px;background:#e6e6e6"></div>
<div class="a" style="left:231.40px;top:710.60px;width:981.60px;height:1.00px;background:#e6e6e6"></div>
<div class="t" style="left:977.00px;top:691.23px;font-size:10.6px;color:#3a3a3a;font-weight:400;letter-spacing:-0.243px;">Rows per page</div>
<div class="t" style="left:1051.00px;top:691.23px;font-size:10.6px;color:#3a3a3a;font-weight:400;letter-spacing:-1.067px;">100</div>
<svg class="a" style="left:1069.5px;top:692.5px" width="9" height="5" viewBox="0 0 9 5"><path d="M0.3 0.3 H8.3 L4.3 4.4 Z" fill="#0d2d55"/></svg>
<div class="t" style="left:1101.00px;top:691.23px;font-size:10.6px;color:#3a3a3a;font-weight:400;letter-spacing:-0.352px;">1–100 of 100+ items</div>
<div class="a" style="left:220.00px;top:712.00px;width:993.00px;height:32.00px;background:linear-gradient(180deg,rgba(0,0,0,0) 0%,rgba(0,0,0,0.012) 50%,rgba(0,0,0,0.045) 100%);border-radius:0 0 0 3px"></div>
<div class="a" style="left:1150.00px;top:135.00px;width:63.00px;height:630.00px;background:linear-gradient(90deg,rgba(0,0,0,0) 0%,rgba(0,0,0,0.03) 50%,rgba(0,0,0,0.1) 100%)"></div>
<div class="a" style="left:1212.00px;top:98.00px;width:1.00px;height:667.00px;background:#a9aec0"></div>
</div></div>
</div></body></html>
